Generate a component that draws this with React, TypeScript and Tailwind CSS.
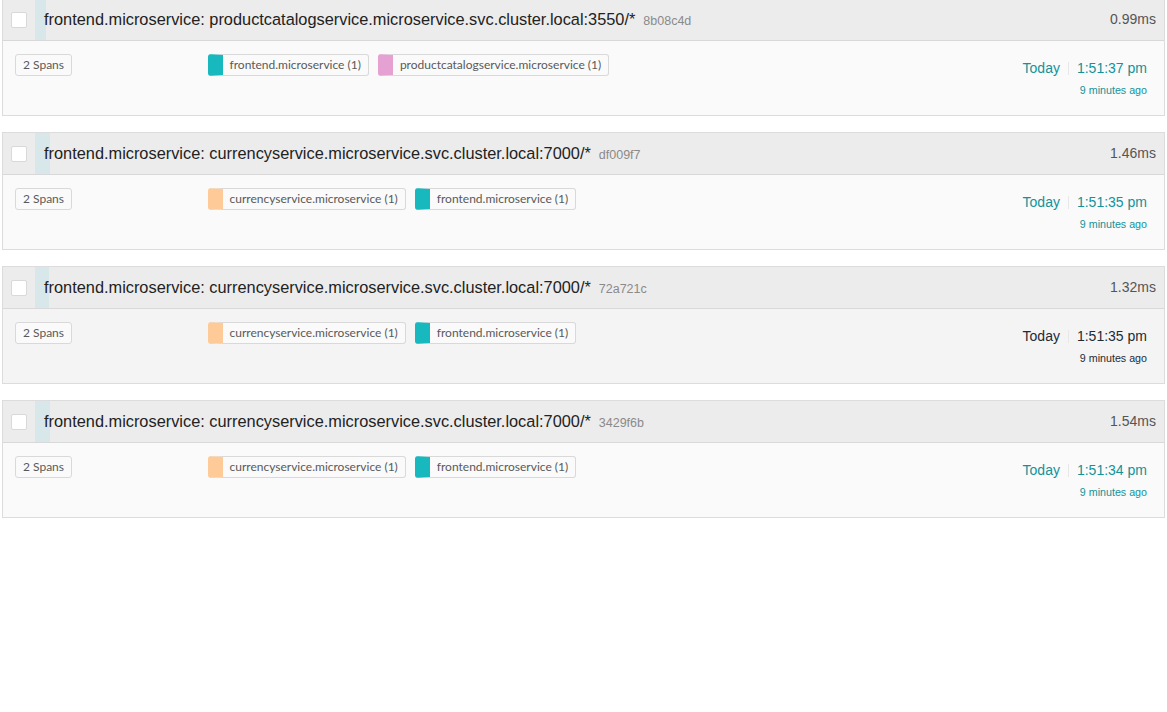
import React from "react";

type Svc = { name: string; color: string };
type Trace = {
  svc: string;
  id: string;
  dur: string;
  bar: number;
  tags: Svc[];
  time: string;
  hover?: boolean;
};

const TEAL = "#17b8be";
const PINK = "#e6a1d3";
const ORANGE = "#fecb98";

const traces: Trace[] = [
  {
    svc: "productcatalogservice.microservice.svc.cluster.local:3550/*",
    id: "8b08c4d",
    dur: "0.99ms",
    bar: 11,
    tags: [
      { name: "frontend.microservice (1)", color: TEAL },
      { name: "productcatalogservice.microservice (1)", color: PINK },
    ],
    time: "1:51:37",
  },
  {
    svc: "currencyservice.microservice.svc.cluster.local:7000/*",
    id: "df009f7",
    dur: "1.46ms",
    bar: 15,
    tags: [
      { name: "currencyservice.microservice (1)", color: ORANGE },
      { name: "frontend.microservice (1)", color: TEAL },
    ],
    time: "1:51:35",
  },
  {
    svc: "currencyservice.microservice.svc.cluster.local:7000/*",
    id: "72a721c",
    dur: "1.32ms",
    bar: 14,
    tags: [
      { name: "currencyservice.microservice (1)", color: ORANGE },
      { name: "frontend.microservice (1)", color: TEAL },
    ],
    time: "1:51:35",
    hover: true,
  },
  {
    svc: "currencyservice.microservice.svc.cluster.local:7000/*",
    id: "3429f6b",
    dur: "1.54ms",
    bar: 15,
    tags: [
      { name: "currencyservice.microservice (1)", color: ORANGE },
      { name: "frontend.microservice (1)", color: TEAL },
    ],
    time: "1:51:34",
  },
];

const tagFont = { fontFamily: "Lato, 'Open Sans', sans-serif" };

function Card({ t }: { t: Trace }) {
  const linkColor = t.hover ? "text-[#1c2b36]" : "text-[#11939a]";
  return (
    <div className="mb-4 border border-[#dcdcdc] font-['Liberation_Sans',Arial,sans-serif]">
      <div className="flex h-[42px] border-b border-[#d8d8d8] bg-[#ececec]">
        <label className="flex w-[32px] flex-none items-center justify-center">
          <span className="block h-4 w-4 rounded-[2px] border border-[#d9d9d9] bg-white" />
        </label>
        <div className="relative flex flex-1 items-center pl-[9px] pr-2">
          <div
            className="absolute bottom-0 left-0 top-0 bg-[#d7e7ea]"
            style={{ width: t.bar }}
          />
          <div className="relative flex flex-1 items-baseline">
            <span className="text-[16.35px] text-[#222]">
              frontend.microservice: {t.svc}
            </span>
            <span className="pl-2 text-[12.5px] text-[#8a8a8a]">{t.id}</span>
          </div>
          <span className="relative -mt-[1px] text-[14px] text-[#555]">{t.dur}</span>
        </div>
      </div>
      <div className={`flex h-[74px] ${t.hover ? "bg-[#f4f4f4]" : "bg-[#fafafa]"}`}>
        <div className="flex w-1/6 items-start px-3 pt-[13px]">
          <span
            className="block h-[22px] rounded-[3px] border border-[#d9d9d9] bg-[#fafafa] px-[7px] text-[12px] leading-[20px] text-[#595959]"
            style={tagFont}
          >
            2 Spans
          </span>
        </div>
        <div className="-ml-px flex w-4/6 items-start gap-[9px] px-3 pt-[13px]">
          {t.tags.map((s) => (
            <span
              key={s.name}
              className="block h-[22px] rounded-[3px] border border-l-[15px] border-[#d9d9d9] bg-[#fafafa] px-[7px] text-[12px] leading-[20px] text-[#595959]"
              style={{ ...tagFont, borderLeftColor: s.color }}
            >
              {s.name}
            </span>
          ))}
        </div>
        <div className={`w-1/6 px-4 pt-[17px] text-right ${linkColor}`}>
          <div className="flex items-center justify-end text-[14px] leading-[21px]">
            <span>Today</span>
            <span className="mx-2 inline-block h-[13px] w-px bg-[#e8e8e8]" />
            <span>{t.time} pm</span>
          </div>
          <div className="mt-px text-[10.7px] leading-[21px]">9 minutes ago</div>
        </div>
      </div>
    </div>
  );
}

export default function App() {
  return (
    <div className="min-h-[712px] bg-white px-[2px]">
      <div className="-mt-[2px]">
        {traces.map((t) => (
          <Card key={t.id} t={t} />
        ))}
      </div>
    </div>
  );
}
